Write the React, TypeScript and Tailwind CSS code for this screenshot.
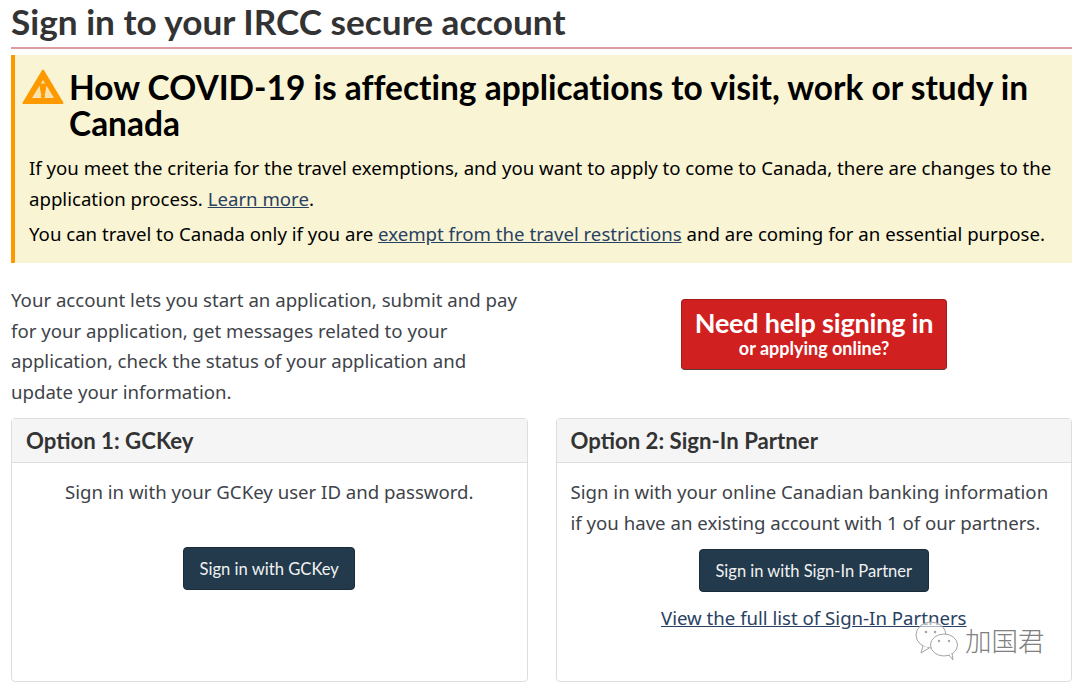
export default function App() {
  return (
    <div className="relative w-[1080px] h-[688px] overflow-hidden bg-white pl-[11px] pr-[8px] text-[#3e4349] font-['Noto_Sans',sans-serif] text-[18.64px] leading-[30.6px]">
      <h1 className="h-[49px] border-b-2 border-[#dc9ca2] font-['Lato',sans-serif] font-bold text-[35.2px] leading-[42px] text-[#333]">Sign in to your IRCC secure account</h1>
      <div className="mt-[6px] h-[208px] border-l-4 border-[#ff9900] bg-[#f9f4d4] pl-[14px] pr-[16px] pt-[14px] text-black">
        <div className="relative pl-[40px] font-['Lato',sans-serif] font-bold text-[33.47px] leading-[36px] [font-variant-ligatures:none]">
          <svg className="absolute -left-[7px] top-[0px]" width="42" height="36" viewBox="0 0 42 36">
            <path d="M21 1.5 L40.5 34 L1.5 34 Z" fill="#ff9900" stroke="#ff9900" strokeLinejoin="round" strokeWidth="2" />
            <path d="M21 11 L32 29 L10 29 Z" fill="#f9e4b0" />
            <path d="M17 14.5 L25 14.5 L23 25 L19 25 Z" fill="#ff9900" />
            <circle cx="21" cy="27" r="2.2" fill="#ff9900" />
          </svg>
          <span className="block">How COVID-19 is affecting applications to visit, work or study in Canada</span>
        </div>
        <p className="mt-[12px]">If you meet the criteria for the travel exemptions, and you want to apply to come to Canada, there are changes to the application process. <a className="underline text-[#284162]">Learn more</a>.</p>
        <p className="mt-[5px]">You can travel to Canada only if you are <a className="underline text-[#284162]">exempt from the travel restrictions</a> and are coming for an essential purpose.</p>
      </div>
      <div className="mt-[22px] flex h-[133px]">
        <p className="w-[517px]">Your account lets you start an application, submit and pay for your application, get messages related to your application, check the status of your application and update your information.</p>
        <div className="flex-1 flex justify-center pl-[28px] pt-[14px]">
          <a className="flex flex-col items-center justify-center w-[266px] h-[71px] rounded-[4px] bg-[#d12020] border border-[#a51a1a] border-b-[#5a3a3a] pb-[3px] font-['Lato',sans-serif] font-bold text-white">
            <span className="text-[27px] leading-[30px] tracking-[-0.2px]">Need help signing in</span>
            <span className="text-[18px] leading-[20px]">or applying online?</span>
          </a>
        </div>
      </div>
      <div className="flex gap-[28px] h-[264px]">
        <section className="w-[517px] border border-[#dddddd] rounded-[4px]">
          <h2 className="h-[44px] px-[14px] bg-[#f5f5f5] border-b border-[#dddddd] font-['Lato',sans-serif] font-bold text-[22.2px] leading-[43px] text-[#333]">Option 1: GCKey</h2>
          <div className="px-[14px] pt-[14px] text-center">
            <p>Sign in with your GCKey user ID and password.</p>
            <a className="mt-[39px] inline-block w-[172px] h-[43px] rounded-[4px] bg-[#223a4c] border border-[#1a2c3a] font-['Lato',sans-serif] text-[16.6px] leading-[42px] text-[#f2f2f2]">Sign in with GCKey</a>
          </div>
        </section>
        <section className="w-[517px] border border-[#dddddd] rounded-[4px]">
          <h2 className="h-[44px] px-[14px] bg-[#f5f5f5] border-b border-[#dddddd] font-['Lato',sans-serif] font-bold text-[22.2px] leading-[43px] text-[#333]">Option 2: Sign-In Partner</h2>
          <div className="px-[14px] pt-[14px] text-center">
            <p className="text-left">Sign in with your online Canadian banking information if you have an existing account with 1 of our partners.</p>
            <a className="mt-[11px] inline-block w-[230px] h-[43px] rounded-[4px] bg-[#223a4c] border border-[#1a2c3a] font-['Lato',sans-serif] text-[16.5px] leading-[42px] text-[#f2f2f2]">Sign in with Sign-In Partner</a>
            <p className="mt-[11px]"><a className="underline text-[#284162]">View the full list of Sign-In Partners</a></p>
          </div>
        </section>
      </div>
      <div className="absolute left-[914px] top-[620px] flex items-center gap-[5px]">
        <svg width="46" height="46" viewBox="0 0 46 46" fill="none" stroke="#a5a5a5" strokeWidth="1">
          <ellipse cx="17" cy="15" rx="15" ry="13" fill="#ffffff" fillOpacity="0.6" />
          <path d="M9 26 L7 33 L15 28" fill="#ffffff" />
          <ellipse cx="30" cy="25" rx="13.5" ry="11" fill="#ffffff" />
          <path d="M35 35 L39 40 L38 33" fill="#ffffff" />
          <circle cx="12" cy="12" r="1.3" fill="#a5a5a5" stroke="none" />
          <circle cx="21" cy="12" r="1.3" fill="#a5a5a5" stroke="none" />
          <circle cx="25" cy="21" r="1.2" fill="#a5a5a5" stroke="none" />
          <circle cx="35" cy="21" r="1.2" fill="#a5a5a5" stroke="none" />
        </svg>
        <span className="-mt-[6px] font-['Noto_Sans_CJK_SC',sans-serif] font-light text-[26.5px] leading-[30px] text-[#808080] [text-shadow:0_0_2px_#fff]">加国君</span>
      </div>
    </div>
  );
}
